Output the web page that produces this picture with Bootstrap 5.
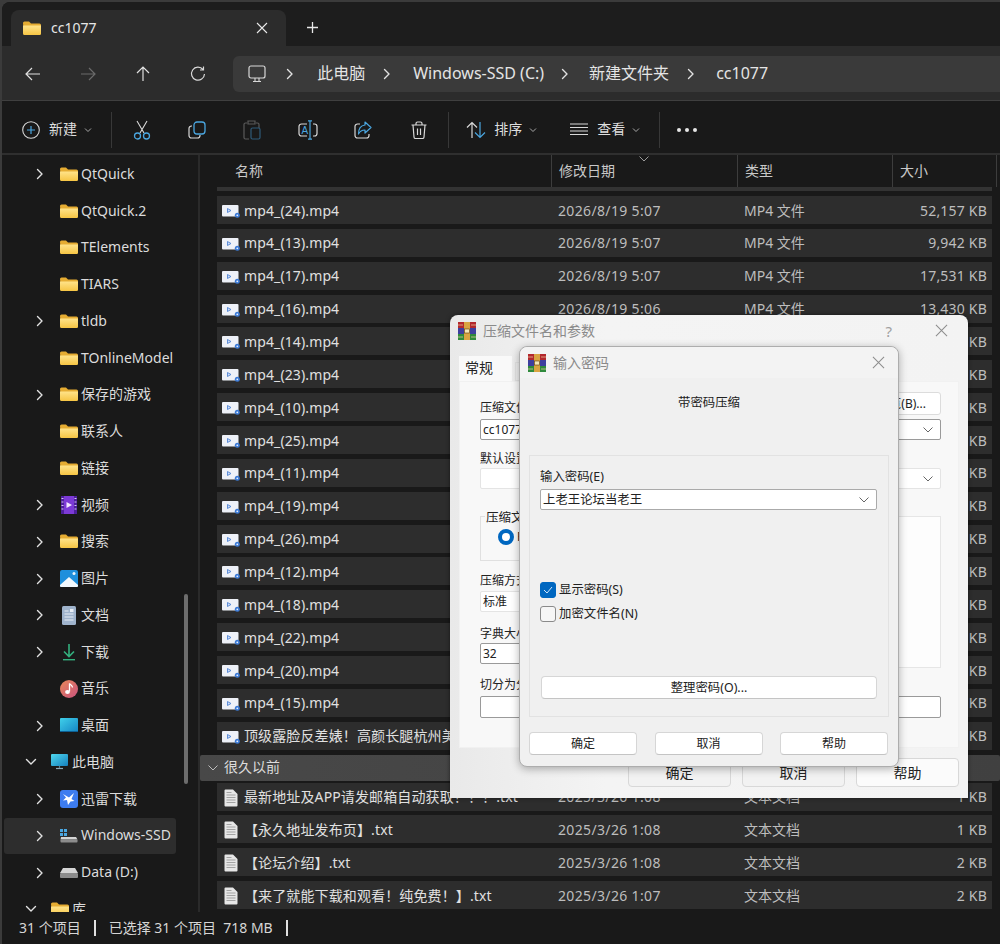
<!DOCTYPE html>
<html lang="zh-CN">
<head>
<meta charset="utf-8">
<title>cc1077</title>
<link href="https://cdn.jsdelivr.net/npm/bootstrap@5.3.0/dist/css/bootstrap.min.css" rel="stylesheet">
<style>
html,body{height:944px;overflow:hidden}
body{background:#3b3b3b;font:14px/1.2 "Noto Sans","Noto Sans CJK SC",sans-serif;color:#dedede;position:relative}
.win{position:absolute;left:2px;top:2px;width:998px;height:942px;overflow:hidden;background:#191919;border-top-left-radius:8px}
svg{display:block;flex:none}
.tabbar{height:44px;background:#1d1d1d;padding-left:9px;padding-top:8px}
.tabitem{width:275px;height:36px;background:#2c2c2c;border-radius:8px 8px 0 0;padding:0 18px 0 12px;color:#e6e6e6}
.plus{margin-left:20px;margin-top:-2px}
.navrow{height:55px;background:#2c2c2c;border-bottom:1px solid #3f3f3f;padding-left:3.5px;padding-top:2px}
.navslot{width:55.3px}
.crumbs{position:relative;margin-left:7.5px;flex:1;height:36px;background:#3a3a3a;border-radius:6px 0 0 6px;padding-left:15px;font-size:16px;color:#e4e4e4}
.crumbs span{white-space:nowrap}
.tools{height:54px;border-bottom:2px solid #2f2f2f;background:#191919;padding-top:5px;white-space:nowrap}
.sep{width:1px;height:36px;background:#383838}
.slot{width:55.4px}
.body-row{height:757px}
.side{width:198px;flex:none;border-right:2px solid #2a2a2a;overflow:hidden;position:relative;padding-top:1px}
.s-item{height:36.75px;padding-left:30px;white-space:nowrap;overflow:hidden;color:#dcdcdc}
.s-item.top{padding-left:21px}
.s-item.sel{background:#2d2d2d;margin:0 22px 0 2px;padding-left:28px;border-radius:3px}
.chev{width:28px;flex:none}
.s-item.top .chev{width:28px}
.s-ico{width:18px;margin-right:3px;flex:none}
.s-item.top .s-ico{margin-right:3px}
.sbar{position:absolute;left:182px;top:439px;width:4px;height:190px;background:#6d6d6d;border-radius:2px}
.main{flex:1;min-width:0;padding-left:0;overflow:hidden}
.heads{height:32px;color:#c8c8c8;position:relative}
.hcell{height:32px;border-right:1px solid #3d3d3d;padding-left:7px}
.rowsbox{padding:0 8px 0 17px}
.peek{height:4px;background:#333;margin-bottom:5px}
.frow{height:28px;margin-bottom:4.87px;background:#2d2d2d;padding:2px 5px 0;white-space:nowrap}
.fname{width:336px;flex:none;overflow:hidden;color:#e0e0e0;letter-spacing:.12px}
.fname svg{margin-right:4px}
.fdate{width:186px;flex:none;color:#bdbdbd;letter-spacing:.35px}
.ftype{flex:1;color:#bdbdbd}
.fsize{color:#bdbdbd;letter-spacing:.2px}
.ghead{height:26px;margin:0 -8px 2px -17px;background:linear-gradient(90deg,#484848,#404040);padding-left:7px;color:#dcdcdc;font-size:14px;border-radius:2px}
.status{position:absolute;left:0;right:0;top:910px;height:32px;background:#191919;padding-left:17px;color:#d6d6d6}
.bar{width:2px;height:16px;background:#e0e0e0}
/* dialogs */
.dlg{position:absolute;color:#222;font-size:12px;line-height:14px}
.dlg1{left:450px;top:315px;width:518px;height:483px;background:linear-gradient(90deg,#e9e9e9,#f4f4f4 30%,#f3f3f3);border-radius:8px 8px 0 0;padding:0 9px;box-shadow:0 0 4px rgba(0,0,0,.5)}
.dlg2{left:519px;top:346px;width:380px;height:421px;background:#f0f0f0;border:1px solid #adadad;border-radius:8px;box-shadow:0 2px 8px rgba(0,0,0,.3);padding:0 9px 0 9px}
.dtitle{height:31px;margin:0 -9px;padding:0 20px 0 8px;color:#8a8a8a;font-size:14px}
.dlg2 .dtitle{background:#f3f3f3;border-radius:8px 8px 0 0;padding-right:13px}
.dtabs{padding-top:10px;height:35px;gap:3px}
.dtab{width:53px;height:25px;background:#f9f9f9;padding:5px 6px 0;font-size:14px;color:#222}
.dtab2{margin-top:6px;height:19px;width:60px;padding:0 6px;background:#eee;font-size:12px;border:1px solid #e3e3e3;color:#333}
.panel{height:367px;background:#f8f8f8;padding:9px 17px 0 20px;border:1px solid #f1f1f1}
.lbl{height:14px;white-space:nowrap}
.cmb{background:#fff;border:1px solid #9a9a9a;padding:0 6px 0 2px;height:21px;border-radius:2px;color:#222;font-size:12px}
.cmb.soft{border-color:#e4e4e4}
.pbtn{background:#fff;border:1px solid #dcdcdc;border-radius:3px;height:23px;padding:0 14px 0 0;width:100px;justify-content:flex-end}
.gbx{border:1px solid #e0e0e0;height:45px;padding-left:17px;position:relative;padding-bottom:3px;margin-top:27px}
.gleg{position:absolute;left:4px;top:-6px;background:#f8f8f8;padding:0 1px;font-size:12.5px}
.radio{width:16px;height:16px;border-radius:50%;border:4.5px solid #0067c0;background:#fff}
.rbox{width:222px;flex:none;height:152px;background:#fdfdfd;border:1px solid #e6e6e6;margin-top:27px}
.bbtn{width:103px;height:29px;border:1px solid #d8d8d8;border-radius:4px;background:#f2f2f2;font-size:14px;color:#222}
.bbtn.w{background:#fbfbfb}
.gp2{border:1px solid #e2e2e2;height:262px;padding:14px 11px 0 10px;margin-top:0}
.chk{width:16px;height:16px;border-radius:3px;border:1px solid #8a8a8a;background:#f6f6f6}
.chk.on{background:#0067c0;border-color:#0067c0}
.wbtn{background:#fff;border:1px solid #d6d6d6;border-bottom-color:#c4c4c4;border-radius:4px;height:23px;color:#222}
</style>
</head>
<body>
<svg width="0" height="0" style="position:absolute">
<defs>
<linearGradient id="fg" x1="0" y1="0" x2="0" y2="1"><stop offset="0" stop-color="#ffe38a"/><stop offset="1" stop-color="#f6c544"/></linearGradient>
<symbol id="i-folder" viewBox="0 0 18 15"><path d="M0 2a1.500 1.500 0 0 1 1.500-1.500h4.500l2 2h8.500a1.500 1.500 0 0 1 1.500 1.500v8a1.500 1.500 0 0 1-1.500 1.500h-15a.5.5 0 0 1-.5-.5z" fill="#e5ac32"/><path d="M0 4.500h18v8a1.500 1.500 0 0 1-1.500 1.500h-15a1.500 1.500 0 0 1-1.500-1.500z" fill="url(#fg)"/></symbol>
<symbol id="i-mp4" viewBox="0 0 18 14"><rect x="0" y="1" width="16.500" height="11.500" rx="1" fill="#eef1f8"/><path d="M5.500 4.500v4l3.500-2z" fill="#cfdcf5" stroke="#3f78d0" stroke-width=".8"/><circle cx="15.300" cy="11.300" r="2.500" fill="#3d7bd6"/><circle cx="15.300" cy="11.300" r=".9" fill="#e8eefb"/></symbol>
<symbol id="i-txt" viewBox="0 0 14 18"><path d="M.5 1.500a1 1 0 0 1 1-1h7.500l4.500 4.500v11.500a1 1 0 0 1-1 1h-11a1 1 0 0 1-1-1z" fill="#e6e6e6"/><path d="M2.500 6h9M2.500 8.500h9M2.500 11h9M2.500 13.500h9M2.500 3.500h5" stroke="#9b9b9b" stroke-width=".9"/></symbol>
<symbol id="i-chev" viewBox="0 0 12 12"><path d="M3.500 1.500l4.500 4.500-4.500 4.500" fill="none" stroke="#e2e2e2" stroke-width="1.400" stroke-linecap="round" stroke-linejoin="round"/></symbol>
<symbol id="i-down" viewBox="0 0 12 12"><path d="M1.500 3.500l4.500 4.500 4.500-4.500" fill="none" stroke="#e2e2e2" stroke-width="1.400" stroke-linecap="round" stroke-linejoin="round"/></symbol>
<symbol id="i-gdown" viewBox="0 0 12 12"><path d="M1.500 3.500l4.500 4.500 4.500-4.500" fill="none" stroke="#bdbdbd" stroke-width="1"/></symbol>
<symbol id="i-caret" viewBox="0 0 8 6"><path d="M1 1.500l3 3 3-3" fill="none" stroke="#a8a8a8" stroke-width="1"/></symbol>
<symbol id="i-dcaret" viewBox="0 0 12 8"><path d="M1.500 1.500l4.500 4.500 4.500-4.500" fill="none" stroke="#666" stroke-width="1"/></symbol>
<symbol id="i-hcaret" viewBox="0 0 12 8"><path d="M1.500 1.500l4.500 4.500 4.500-4.500" fill="none" stroke="#9a9a9a" stroke-width="1"/></symbol>
<symbol id="i-x" viewBox="0 0 14 14"><path d="M1 1l12 12M13 1l-12 12" stroke="#8c8c8c" stroke-width="1.100"/></symbol>
<symbol id="i-rar" viewBox="0 0 18 18"><rect y="0" width="18" height="6" fill="#b3282d"/><rect y="6" width="18" height="6" fill="#3d3f9e"/><rect y="12" width="18" height="6" fill="#2f8a3c"/><rect x="6" y="0" width="6" height="18" fill="#d9a441"/><rect x="6.500" y="7" width="5" height="4" fill="#f4e7b5" stroke="#5a3a10" stroke-width=".6"/><path d="M0 3h5M13 3h5M0 15h5M13 15h5" stroke="#f0d0a0" stroke-width=".7"/></symbol>
</defs>
</svg>

<div class="win d-flex flex-column">
  <div class="tabbar d-flex">
    <div class="tabitem d-flex align-items-center">
      <svg width="18" height="15" class="me-2"><use href="#i-folder"/></svg>
      <span class="flex-grow-1" style="margin-left:2px">cc1077</span>
      <svg width="12" height="12"><path d="M1 1l10 10M11 1l-10 10" stroke="#e8e8e8" stroke-width="1.100"/></svg>
    </div>
    <div class="plus d-flex align-items-center"><svg width="13" height="13"><path d="M6.500 1v11M1 6.500h11" stroke="#e8e8e8" stroke-width="1.300"/></svg></div>
  </div>
  <div class="navrow d-flex align-items-center">
    <div class="navslot d-flex justify-content-center"><svg width="16" height="14"><path d="M15 7H1.500M7 1L1 7l6 6" fill="none" stroke="#e0e0e0" stroke-width="1.200"/></svg></div>
    <div class="navslot d-flex justify-content-center"><svg width="16" height="14"><path d="M1 7h13.500M9 1l6 6-6 6" fill="none" stroke="#6b6b6b" stroke-width="1.200"/></svg></div>
    <div class="navslot d-flex justify-content-center" style="margin-left:-1px"><svg width="14" height="16"><path d="M7 15V1.500M1 7l6-6 6 6" fill="none" stroke="#e0e0e0" stroke-width="1.200"/></svg></div>
    <div class="navslot d-flex justify-content-center"><svg width="16" height="16"><path d="M13 3.500A6.500 6.500 0 1 0 14.500 8M13.500 .5v3.500H10" fill="none" stroke="#d8d8d8" stroke-width="1.200"/></svg></div>
    <div class="crumbs d-flex align-items-center">
      <svg width="18" height="18" style="margin-right:18px"><rect x="1" y="1" width="16" height="12" rx="2" fill="none" stroke="#d8d8d8" stroke-width="1.200"/><path d="M7 13v3M11 13v3M5 16.500h8" stroke="#d8d8d8" stroke-width="1.100"/></svg>
      <svg width="12" height="12" style="margin-right:21px"><use href="#i-chev"/></svg>
      <span style="margin-right:16px">此电脑</span>
      <svg width="12" height="12" style="margin-right:20px"><use href="#i-chev"/></svg>
      <span style="margin-right:15px">Windows-SSD (C:)</span>
      <svg width="12" height="12" style="margin-right:18px"><use href="#i-chev"/></svg>
      <span style="margin-right:16px">新建文件夹</span>
      <svg width="12" height="12" style="margin-right:19px"><use href="#i-chev"/></svg>
      <span>cc1077</span>
    </div>
  </div>
  <div class="tools d-flex align-items-center">
    <div class="d-flex align-items-center" style="padding-left:20px;width:109px">
      <svg width="18" height="18" style="margin-right:9px"><circle cx="9" cy="9" r="8.300" fill="none" stroke="#d8d8d8" stroke-width="1.100"/><path d="M9 5v8M5 9h8" stroke="#4aa6e0" stroke-width="1.200"/></svg>
      <span>新建</span>
      <svg width="8" height="6" style="margin-left:7px"><use href="#i-caret"/></svg>
    </div>
    <div class="sep"></div>
    <div class="slot d-flex justify-content-center" style="margin-left:2px"><svg width="18" height="20"><path d="M4 1l7 12M14 1L7 13" stroke="#d8d8d8" stroke-width="1.100" fill="none"/><circle cx="4.500" cy="16" r="3" fill="none" stroke="#4aa6e0" stroke-width="1.300"/><circle cx="13.500" cy="16" r="3" fill="none" stroke="#4aa6e0" stroke-width="1.300"/></svg></div>
    <div class="slot d-flex justify-content-center"><svg width="18" height="18"><rect x="6" y="1" width="11" height="12" rx="3" fill="none" stroke="#4aa6e0" stroke-width="1.300"/><path d="M4 5H3.500A2.500 2.500 0 0 0 1 7.500v7A2.500 2.500 0 0 0 3.500 17h6a2.500 2.500 0 0 0 2.500-2.500V14" fill="none" stroke="#d8d8d8" stroke-width="1.200"/></svg></div>
    <div class="slot d-flex justify-content-center"><svg width="18" height="20"><path d="M4 3H2.500A1.500 1.500 0 0 0 1 4.500v13A1.500 1.500 0 0 0 2.500 19H6M13 3h1.500A1.500 1.500 0 0 1 16 4.500V8M5 1h7v3H5z" fill="none" stroke="#5a5a5a" stroke-width="1.200"/><rect x="8" y="8" width="9" height="11" rx="1.500" fill="none" stroke="#2e5a78" stroke-width="1.200"/></svg></div>
    <div class="slot d-flex justify-content-center"><svg width="20" height="20"><path d="M9 4H3.500A2.500 2.500 0 0 0 1 6.500v7A2.500 2.500 0 0 0 3.500 16H9M15 4h1.500A2.500 2.500 0 0 1 19 6.500v7a2.500 2.500 0 0 1-2.500 2.500H15" fill="none" stroke="#d8d8d8" stroke-width="1.200"/><path d="M10 .8h4M12 .8v18.400M10 19.200h4" stroke="#4aa6e0" stroke-width="1.200" fill="none"/><text x="3.500" y="14" font-size="10" fill="#4aa6e0" font-family="Liberation Sans">A</text></svg></div>
    <div class="slot d-flex justify-content-center"><svg width="18" height="18"><path d="M6 3H3.500A2.500 2.500 0 0 0 1 5.500v9A2.500 2.500 0 0 0 3.500 17h9a2.500 2.500 0 0 0 2.500-2.500V13" fill="none" stroke="#d8d8d8" stroke-width="1.200"/><path d="M11 1l6 5.500-6 5.500V9C8 9 6 10 4.500 13 4.500 8 7 4.500 11 4z" fill="none" stroke="#4aa6e0" stroke-width="1.200" stroke-linejoin="round"/></svg></div>
    <div class="slot d-flex justify-content-center"><svg width="16" height="18"><path d="M.5 4h15M2 4l1 12a1.500 1.500 0 0 0 1.500 1.500h7A1.500 1.500 0 0 0 13 16l1-12M5 4V2.500A1.500 1.500 0 0 1 6.500 1h3A1.500 1.500 0 0 1 11 2.500V4M6.500 7.500v6.500M9.500 7.500v6.500" fill="none" stroke="#d8d8d8" stroke-width="1.200"/></svg></div>
    <div class="sep" style="margin-left:2px"></div>
    <div class="d-flex align-items-center" style="margin-left:17px;width:174px">
      <svg width="20" height="18" style="margin-right:8px"><path d="M6 17V1.500M1 6.500l5-5 5 5" fill="none" stroke="#d8d8d8" stroke-width="1.200"/><path d="M14 1v15.500M9 11.500l5 5 5-5" fill="none" stroke="#4aa6e0" stroke-width="1.200"/></svg>
      <span>排序</span>
      <svg width="8" height="6" style="margin-left:7px;margin-right:33px"><use href="#i-caret"/></svg>
      <svg width="18" height="13" style="margin-right:9px"><path d="M0 1h18M0 4.500h18M0 8h18M0 11.500h18" stroke="#d8d8d8" stroke-width="1.100"/></svg>
      <span>查看</span>
      <svg width="8" height="6" style="margin-left:7px"><use href="#i-caret"/></svg>
    </div>
    <div class="sep" style="margin-left:19px"></div>
    <svg width="20" height="4" style="margin-left:17px"><circle cx="2" cy="2" r="2" fill="#e6e6e6"/><circle cx="10" cy="2" r="2" fill="#e6e6e6"/><circle cx="18" cy="2" r="2" fill="#e6e6e6"/></svg>
  </div>

  <div class="body-row d-flex">
    <div class="side">
      <div class="s-item d-flex align-items-center"><svg class="chev" width="12" height="12"><svg x="2" width="12" height="12"><use href="#i-chev"/></svg></svg><svg class="s-ico" height="15"><use href="#i-folder"/></svg>QtQuick</div>
      <div class="s-item d-flex align-items-center"><span class="chev"></span><svg class="s-ico" height="15"><use href="#i-folder"/></svg>QtQuick.2</div>
      <div class="s-item d-flex align-items-center"><span class="chev"></span><svg class="s-ico" height="15"><use href="#i-folder"/></svg>TElements</div>
      <div class="s-item d-flex align-items-center"><span class="chev"></span><svg class="s-ico" height="15"><use href="#i-folder"/></svg>TIARS</div>
      <div class="s-item d-flex align-items-center"><svg class="chev" width="12" height="12"><svg x="2" width="12" height="12"><use href="#i-chev"/></svg></svg><svg class="s-ico" height="15"><use href="#i-folder"/></svg>tldb</div>
      <div class="s-item d-flex align-items-center"><span class="chev"></span><svg class="s-ico" height="15"><use href="#i-folder"/></svg>TOnlineModel</div>
      <div class="s-item d-flex align-items-center"><svg class="chev" width="12" height="12"><svg x="2" width="12" height="12"><use href="#i-chev"/></svg></svg><svg class="s-ico" height="15"><use href="#i-folder"/></svg>保存的游戏</div>
      <div class="s-item d-flex align-items-center"><span class="chev"></span><svg class="s-ico" height="15"><use href="#i-folder"/></svg>联系人</div>
      <div class="s-item d-flex align-items-center"><span class="chev"></span><svg class="s-ico" height="15"><use href="#i-folder"/></svg>链接</div>
      <div class="s-item d-flex align-items-center"><svg class="chev" width="12" height="12"><svg x="2" width="12" height="12"><use href="#i-chev"/></svg></svg>
        <svg class="s-ico" height="18" viewBox="0 0 18 18"><rect x="1" width="16" height="18" rx="2" fill="#7c3ad6"/><rect x="1" width="3" height="18" fill="#4d1f9c"/><rect x="14" width="3" height="18" fill="#4d1f9c"/><path d="M1.500 2.500h2M1.500 6h2M1.500 9.500h2M1.500 13h2M14.500 2.500h2M14.500 6h2M14.500 9.500h2M14.500 13h2" stroke="#d5c4f5" stroke-width="1.200"/><path d="M6.500 6v6l5.500-3z" fill="#f2e7ff"/></svg>视频</div>
      <div class="s-item d-flex align-items-center"><svg class="chev" width="12" height="12"><svg x="2" width="12" height="12"><use href="#i-chev"/></svg></svg><svg class="s-ico" height="15"><use href="#i-folder"/></svg>搜索</div>
      <div class="s-item d-flex align-items-center"><svg class="chev" width="12" height="12"><svg x="2" width="12" height="12"><use href="#i-chev"/></svg></svg>
        <svg class="s-ico" height="17" viewBox="0 0 18 17"><rect width="18" height="17" rx="2" fill="#1f8fdc"/><path d="M0 15l9-8 9 8v1a1 1 0 0 1-1 1H1a1 1 0 0 1-1-1z" fill="#f2f8fd"/><circle cx="14" cy="3.500" r="1.500" fill="#e8f4fc"/></svg>图片</div>
      <div class="s-item d-flex align-items-center"><svg class="chev" width="12" height="12"><svg x="2" width="12" height="12"><use href="#i-chev"/></svg></svg>
        <svg class="s-ico" height="19" viewBox="0 0 18 19"><rect x="2" width="14" height="19" rx="1.500" fill="#9fb3cc"/><path d="M4.500 5h4M4.500 8h9M4.500 11h9M4.500 14h9" stroke="#e8eef5" stroke-width="1"/><rect x="10" y="3" width="3.500" height="3" fill="#e8eef5"/></svg>文档</div>
      <div class="s-item d-flex align-items-center"><svg class="chev" width="12" height="12"><svg x="2" width="12" height="12"><use href="#i-chev"/></svg></svg>
        <svg class="s-ico" height="18" viewBox="0 0 18 18"><path d="M9 1v12M4 8.500l5 5 5-5" fill="none" stroke="#33b07e" stroke-width="1.600"/><path d="M3 16.700h12" stroke="#33b07e" stroke-width="1.400"/></svg>下载</div>
      <div class="s-item d-flex align-items-center"><span class="chev"></span>
        <svg class="s-ico" height="18" viewBox="0 0 18 18"><defs><linearGradient id="mg" x1="0" y1="0" x2="1" y2="1"><stop offset="0" stop-color="#e8885a"/><stop offset="1" stop-color="#c8527e"/></linearGradient></defs><circle cx="9" cy="9" r="9" fill="url(#mg)"/><path d="M9.500 3.500v8" stroke="#fff" stroke-width="1.300"/><ellipse cx="7.500" cy="12" rx="2.400" ry="1.900" fill="#fff"/><path d="M9.500 3.500c1 1.800 3 1.800 3 4" fill="none" stroke="#fff" stroke-width="1.300"/></svg>音乐</div>
      <div class="s-item d-flex align-items-center"><svg class="chev" width="12" height="12"><svg x="2" width="12" height="12"><use href="#i-chev"/></svg></svg>
        <svg class="s-ico" height="15" viewBox="0 0 18 15"><defs><linearGradient id="dg" x1="0" y1="0" x2="1" y2="1"><stop offset="0" stop-color="#3fd0ea"/><stop offset="1" stop-color="#1585c4"/></linearGradient></defs><rect width="18" height="14" rx="1" fill="url(#dg)"/><path d="M0 13h18v1H0z" fill="#0d5f93"/></svg>桌面</div>
      <div class="s-item top d-flex align-items-center"><svg class="chev" width="12" height="12"><svg x="2" width="12" height="12"><use href="#i-down"/></svg></svg>
        <svg class="s-ico" height="16" viewBox="0 0 18 16"><defs><linearGradient id="pg" x1="0" y1="0" x2="1" y2="1"><stop offset="0" stop-color="#4fd8ee"/><stop offset="1" stop-color="#1580be"/></linearGradient></defs><rect width="17" height="12" rx="1" fill="url(#pg)"/><path d="M5 14.500h7" stroke="#8ba9b8" stroke-width="1.200"/><path d="M8.500 12v2" stroke="#5f7a88" stroke-width="1.200"/></svg>此电脑</div>
      <div class="s-item d-flex align-items-center"><svg class="chev" width="12" height="12"><svg x="2" width="12" height="12"><use href="#i-chev"/></svg></svg>
        <svg class="s-ico" height="18" viewBox="0 0 18 18"><rect width="18" height="18" rx="3" fill="#3d7cf0"/><path d="M3 4l6 3.500L14 3l-2.500 6 3 2-4 .5L8 15l-1-5-4 .5 3-3z" fill="#fff"/></svg>迅雷下载</div>
      <div class="s-item sel d-flex align-items-center"><svg class="chev" width="12" height="12"><svg x="2" width="12" height="12"><use href="#i-chev"/></svg></svg>
        <svg class="s-ico" height="14" viewBox="0 0 18 14"><rect x="0" y="0" width="3" height="3" fill="#4aa6e0"/><rect x="4" y="0" width="3" height="3" fill="#4aa6e0"/><rect x="0" y="4" width="3" height="3" fill="#4aa6e0"/><rect x="4" y="4" width="3" height="3" fill="#4aa6e0"/><path d="M1 8h15l1.500 2.500H.5z" fill="#d4d4d4"/><rect x=".5" y="10.500" width="17" height="3" rx=".8" fill="#8c8c8c"/></svg>Windows-SSD</div>
      <div class="s-item d-flex align-items-center"><svg class="chev" width="12" height="12"><svg x="2" width="12" height="12"><use href="#i-chev"/></svg></svg>
        <svg class="s-ico" height="10" viewBox="0 0 18 10"><path d="M3 0h12l3 5H0z" fill="#d4d4d4"/><rect y="5" width="18" height="5" rx="1" fill="#8c8c8c"/></svg>Data (D:)</div>
      <div class="s-item top d-flex align-items-center"><svg class="chev" width="12" height="12"><svg x="2" width="12" height="12"><use href="#i-down"/></svg></svg><svg class="s-ico" height="15"><use href="#i-folder"/></svg>库</div>
      <div class="sbar"></div>
    </div>
    <div class="main">
      <div class="heads d-flex">
        <div class="hcell d-flex align-items-center" style="width:352px;padding-left:35px">名称</div>
        <div class="hcell d-flex align-items-center" style="width:186px">修改日期</div>
        <div class="hcell d-flex align-items-center" style="width:155px">类型</div>
        <div class="hcell d-flex align-items-center" style="width:104px">大小</div>
        <svg width="12" height="8" style="position:absolute;left:438px;top:0"><use href="#i-hcaret"/></svg>
      </div>
      <div class="rowsbox">
        <div class="peek"></div>
        <div class="frow d-flex align-items-center"><div class="fname d-flex align-items-center"><svg width="18" height="14"><use href="#i-mp4"/></svg>mp4_(24).mp4</div><div class="fdate">2026/8/19 5:07</div><div class="ftype">MP4 文件</div><div class="fsize">52,157 KB</div></div>
        <div class="frow d-flex align-items-center"><div class="fname d-flex align-items-center"><svg width="18" height="14"><use href="#i-mp4"/></svg>mp4_(13).mp4</div><div class="fdate">2026/8/19 5:07</div><div class="ftype">MP4 文件</div><div class="fsize">9,942 KB</div></div>
        <div class="frow d-flex align-items-center"><div class="fname d-flex align-items-center"><svg width="18" height="14"><use href="#i-mp4"/></svg>mp4_(17).mp4</div><div class="fdate">2026/8/19 5:07</div><div class="ftype">MP4 文件</div><div class="fsize">17,531 KB</div></div>
        <div class="frow d-flex align-items-center"><div class="fname d-flex align-items-center"><svg width="18" height="14"><use href="#i-mp4"/></svg>mp4_(16).mp4</div><div class="fdate">2026/8/19 5:06</div><div class="ftype">MP4 文件</div><div class="fsize">13,430 KB</div></div>
        <div class="frow d-flex align-items-center"><div class="fname d-flex align-items-center"><svg width="18" height="14"><use href="#i-mp4"/></svg>mp4_(14).mp4</div><div class="fdate">2026/8/19 5:06</div><div class="ftype">MP4 文件</div><div class="fsize">KB</div></div>
        <div class="frow d-flex align-items-center"><div class="fname d-flex align-items-center"><svg width="18" height="14"><use href="#i-mp4"/></svg>mp4_(23).mp4</div><div class="fdate">2026/8/19 5:06</div><div class="ftype">MP4 文件</div><div class="fsize">KB</div></div>
        <div class="frow d-flex align-items-center"><div class="fname d-flex align-items-center"><svg width="18" height="14"><use href="#i-mp4"/></svg>mp4_(10).mp4</div><div class="fdate">2026/8/19 5:06</div><div class="ftype">MP4 文件</div><div class="fsize">KB</div></div>
        <div class="frow d-flex align-items-center"><div class="fname d-flex align-items-center"><svg width="18" height="14"><use href="#i-mp4"/></svg>mp4_(25).mp4</div><div class="fdate">2026/8/19 5:06</div><div class="ftype">MP4 文件</div><div class="fsize">KB</div></div>
        <div class="frow d-flex align-items-center"><div class="fname d-flex align-items-center"><svg width="18" height="14"><use href="#i-mp4"/></svg>mp4_(11).mp4</div><div class="fdate">2026/8/19 5:06</div><div class="ftype">MP4 文件</div><div class="fsize">KB</div></div>
        <div class="frow d-flex align-items-center"><div class="fname d-flex align-items-center"><svg width="18" height="14"><use href="#i-mp4"/></svg>mp4_(19).mp4</div><div class="fdate">2026/8/19 5:06</div><div class="ftype">MP4 文件</div><div class="fsize">KB</div></div>
        <div class="frow d-flex align-items-center"><div class="fname d-flex align-items-center"><svg width="18" height="14"><use href="#i-mp4"/></svg>mp4_(26).mp4</div><div class="fdate">2026/8/19 5:06</div><div class="ftype">MP4 文件</div><div class="fsize">KB</div></div>
        <div class="frow d-flex align-items-center"><div class="fname d-flex align-items-center"><svg width="18" height="14"><use href="#i-mp4"/></svg>mp4_(12).mp4</div><div class="fdate">2026/8/19 5:06</div><div class="ftype">MP4 文件</div><div class="fsize">KB</div></div>
        <div class="frow d-flex align-items-center"><div class="fname d-flex align-items-center"><svg width="18" height="14"><use href="#i-mp4"/></svg>mp4_(18).mp4</div><div class="fdate">2026/8/19 5:06</div><div class="ftype">MP4 文件</div><div class="fsize">KB</div></div>
        <div class="frow d-flex align-items-center"><div class="fname d-flex align-items-center"><svg width="18" height="14"><use href="#i-mp4"/></svg>mp4_(22).mp4</div><div class="fdate">2026/8/19 5:06</div><div class="ftype">MP4 文件</div><div class="fsize">KB</div></div>
        <div class="frow d-flex align-items-center"><div class="fname d-flex align-items-center"><svg width="18" height="14"><use href="#i-mp4"/></svg>mp4_(20).mp4</div><div class="fdate">2026/8/19 5:06</div><div class="ftype">MP4 文件</div><div class="fsize">KB</div></div>
        <div class="frow d-flex align-items-center"><div class="fname d-flex align-items-center"><svg width="18" height="14"><use href="#i-mp4"/></svg>mp4_(15).mp4</div><div class="fdate">2026/8/19 5:06</div><div class="ftype">MP4 文件</div><div class="fsize">KB</div></div>
        <div class="frow d-flex align-items-center"><div class="fname d-flex align-items-center"><svg width="18" height="14"><use href="#i-mp4"/></svg>顶级露脸反差婊！高颜长腿杭州美女</div><div class="fdate">2026/8/19 5:06</div><div class="ftype">MP4 文件</div><div class="fsize">KB</div></div>
        <div class="ghead d-flex align-items-center"><svg width="12" height="12" class="me-1"><use href="#i-gdown"/></svg><span style="margin-left:1px">很久以前</span></div>
        <div class="frow d-flex align-items-center"><div class="fname d-flex align-items-center"><svg width="18" height="18"><use href="#i-txt"/></svg>最新地址及APP请发邮箱自动获取！！！.txt</div><div class="fdate">2025/3/26 1:08</div><div class="ftype">文本文档</div><div class="fsize">1 KB</div></div>
        <div class="frow d-flex align-items-center"><div class="fname d-flex align-items-center"><svg width="18" height="18"><use href="#i-txt"/></svg>【永久地址发布页】.txt</div><div class="fdate">2025/3/26 1:08</div><div class="ftype">文本文档</div><div class="fsize">1 KB</div></div>
        <div class="frow d-flex align-items-center"><div class="fname d-flex align-items-center"><svg width="18" height="18"><use href="#i-txt"/></svg>【论坛介绍】.txt</div><div class="fdate">2025/3/26 1:08</div><div class="ftype">文本文档</div><div class="fsize">2 KB</div></div>
        <div class="frow d-flex align-items-center"><div class="fname d-flex align-items-center"><svg width="18" height="18"><use href="#i-txt"/></svg>【来了就能下载和观看！纯免费！】.txt</div><div class="fdate">2025/3/26 1:07</div><div class="ftype">文本文档</div><div class="fsize">2 KB</div></div>
      </div>
    </div>
  </div>
  <div class="status d-flex align-items-center">
    <span>31 个项目</span><span class="bar" style="margin:0 13px"></span><span>已选择 31 个项目&nbsp; 718 MB</span><span class="bar" style="margin-left:13px"></span>
  </div>
</div>

<!-- 压缩文件名和参数 -->
<div class="dlg dlg1">
  <div class="dtitle d-flex align-items-center">
    <svg width="18" height="18" class="me-2"><use href="#i-rar"/></svg>
    <span class="flex-grow-1" style="margin-left:-1px">压缩文件名和参数</span>
    <span style="margin-right:43px;font-size:15px;color:#a0a0a0">?</span>
    <svg width="13" height="13"><use href="#i-x"/></svg>
  </div>
  <div class="dtabs d-flex"><div class="dtab">常规</div><div class="dtab2">高级</div></div>
  <div class="panel d-flex flex-column">
    <div class="d-flex justify-content-between align-items-end" style="height:24px"><span class="lbl">压缩文件名(A)</span><div class="pbtn d-flex align-items-center">浏览(B)...</div></div>
    <div class="cmb d-flex align-items-center justify-content-between" style="margin-top:4px">cc1077.rar<svg width="12" height="8"><use href="#i-dcaret"/></svg></div>
    <div class="lbl" style="margin-top:12px">默认设置</div>
    <div class="cmb soft d-flex align-items-center justify-content-end" style="margin-top:2px"><svg width="12" height="8"><use href="#i-dcaret"/></svg></div>
    <div class="d-flex justify-content-between">
      <div style="width:220px">
        <div class="gbx d-flex align-items-center"><span class="gleg">压缩文件格式</span><span class="radio"></span><span style="margin-left:3px">RAR</span></div>
        <div class="lbl" style="margin-top:13px">压缩方式(C)</div>
        <div class="cmb soft d-flex align-items-center" style="margin-top:3px">标准</div>
        <div class="lbl" style="margin-top:15px">字典大小(I)</div>
        <div class="cmb d-flex align-items-center" style="margin-top:2px">32</div>
      </div>
      <div class="rbox"></div>
    </div>
    <div class="lbl" style="margin-top:10px">切分为分卷(V)，大小</div>
    <div class="cmb" style="margin-top:4px;height:22px"></div>
  </div>
  <div class="d-flex justify-content-end gap-2" style="margin-top:10px;margin-right:0">
    <div class="bbtn d-flex align-items-center justify-content-center" style="margin-right:3px">确定</div>
    <div class="bbtn d-flex align-items-center justify-content-center" style="margin-right:3px">取消</div>
    <div class="bbtn w d-flex align-items-center justify-content-center">帮助</div>
  </div>
</div>

<!-- 输入密码 -->
<div class="dlg dlg2">
  <div class="dtitle d-flex align-items-center">
    <svg width="18" height="18" class="me-2"><use href="#i-rar"/></svg>
    <span class="flex-grow-1" style="margin-left:-1px">输入密码</span>
    <svg width="13" height="13"><use href="#i-x"/></svg>
  </div>
  <div class="text-center" style="margin-top:17px;height:61px;font-size:12.4px;line-height:16px">带密码压缩</div>
  <div class="gp2 d-flex flex-column" style="margin-top:-1px">
    <div class="lbl" style="font-size:12.4px">输入密码(E)</div>
    <div class="cmb d-flex align-items-center justify-content-between" style="margin-top:5px;font-size:12.4px;border-color:#aaa">上老王论坛当老王<svg width="12" height="8"><use href="#i-dcaret"/></svg></div>
    <div class="d-flex align-items-center" style="margin-top:72px"><span class="chk on d-flex align-items-center justify-content-center"><svg width="10" height="8"><path d="M1 4l3 3 5-6" fill="none" stroke="#cfe6fb" stroke-width="1"/></svg></span><span style="margin-left:3px;font-size:12.4px">显示密码(S)</span></div>
    <div class="d-flex align-items-center" style="margin-top:8px"><span class="chk"></span><span style="margin-left:3px;font-size:12.4px">加密文件名(N)</span></div>
    <div class="wbtn d-flex align-items-center justify-content-center" style="margin-top:54px;margin-left:1px;margin-right:0;font-size:12.4px">整理密码(O)...</div>
  </div>
  <div class="d-flex justify-content-between" style="margin-top:15px;padding:0 1px 0 0">
    <div class="wbtn d-flex align-items-center justify-content-center" style="width:108px">确定</div>
    <div class="wbtn d-flex align-items-center justify-content-center" style="width:108px">取消</div>
    <div class="wbtn d-flex align-items-center justify-content-center" style="width:108px">帮助</div>
  </div>
</div>

<script src="https://cdn.jsdelivr.net/npm/bootstrap@5.3.0/dist/js/bootstrap.bundle.min.js"></script>
</body>
</html>
